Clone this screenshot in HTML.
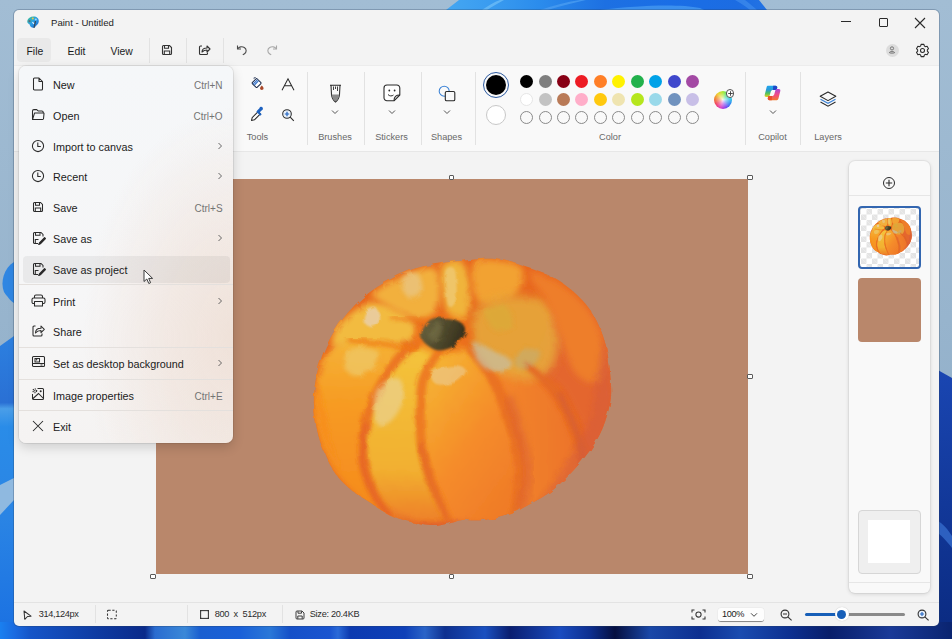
<!DOCTYPE html>
<html><head><meta charset="utf-8">
<style>
*{box-sizing:border-box}
html,body{margin:0;padding:0}
body{width:952px;height:639px;overflow:hidden;position:relative;font-family:"Liberation Sans",sans-serif;color:#1b1b1b;background:#9db8cf}
.a{position:absolute}
.t{position:absolute;white-space:pre;line-height:1}
.sep{position:absolute;width:1px;background:#e2e2e2}
.lbl{position:absolute;white-space:pre;line-height:1;font-size:9px;color:#686868;text-align:center}
.ic{position:absolute;overflow:visible}
.sw{position:absolute;width:13px;height:13px;border-radius:50%}
.swe{position:absolute;width:13px;height:13px;border-radius:50%;border:1px solid #8a8a8a}
.hd{position:absolute;width:5.4px;height:5.4px;border:1.1px solid #5a5a5a;background:#fff;border-radius:1px}
.mi{position:absolute;left:53px;font-size:10.8px;color:#1b1b1b;white-space:pre;line-height:1}
.ms{position:absolute;font-size:10px;color:#747474;white-space:pre;line-height:1;text-align:right}
.msep{position:absolute;left:19px;width:214px;height:1px;background:#e4e0dd}
.st{position:absolute;white-space:pre;line-height:1;font-size:9.2px;color:#2b2b2b}
</style></head><body>
<!-- wallpaper -->
<svg class="a" style="left:0;top:0" width="952" height="639" viewBox="0 0 952 639">
<defs>
<linearGradient id="wl" x1="0" y1="0" x2="0" y2="1">
<stop offset="0" stop-color="#a2bdd4"/><stop offset=".5" stop-color="#97b4cd"/><stop offset="1" stop-color="#8aa9c4"/></linearGradient>
<linearGradient id="wt" x1="440" y1="0" x2="770" y2="0" gradientUnits="userSpaceOnUse"><stop offset="0" stop-color="#46a8f2"/><stop offset=".15" stop-color="#3a9cf0"/><stop offset=".3" stop-color="#2b8cec"/><stop offset=".5" stop-color="#1d70e2"/><stop offset=".7" stop-color="#1a6ee6"/><stop offset=".9" stop-color="#1c6ce2"/><stop offset="1" stop-color="#2474e4"/></linearGradient>
<linearGradient id="wb" x1="0" y1="0" x2="952" y2="0" gradientUnits="userSpaceOnUse"><stop offset="0.0000" stop-color="#1a80f0"/><stop offset="0.0158" stop-color="#1a6ae0"/><stop offset="0.0315" stop-color="#1555c8"/><stop offset="0.1050" stop-color="#0e3aa0"/><stop offset="0.1523" stop-color="#0a2a8a"/><stop offset="0.1628" stop-color="#2a6cd0"/><stop offset="0.1943" stop-color="#3a88d8"/><stop offset="0.2101" stop-color="#1a5fd0"/><stop offset="0.2521" stop-color="#1a60d8"/><stop offset="0.2836" stop-color="#2a78d8"/><stop offset="0.3046" stop-color="#1550c8"/><stop offset="0.3466" stop-color="#1a55d0"/><stop offset="0.3550" stop-color="#2a6ad8"/><stop offset="0.3676" stop-color="#0c3ab0"/><stop offset="0.4254" stop-color="#0e40b8"/><stop offset="0.4464" stop-color="#2a64c8"/><stop offset="0.4674" stop-color="#0e3090"/><stop offset="0.5095" stop-color="#1a50c0"/><stop offset="0.5357" stop-color="#0a1e70"/><stop offset="0.5882" stop-color="#1a4cc0"/><stop offset="0.6197" stop-color="#0d2f90"/><stop offset="0.6460" stop-color="#050f40"/><stop offset="0.6828" stop-color="#1a48a8"/><stop offset="0.7353" stop-color="#0d2f90"/><stop offset="0.7773" stop-color="#1a4cb0"/><stop offset="0.8298" stop-color="#0d3090"/><stop offset="0.8718" stop-color="#081e6a"/><stop offset="0.9349" stop-color="#1a3a98"/><stop offset="1.0000" stop-color="#0a2470"/></linearGradient>
<linearGradient id="wr" x1="0" y1="0" x2="0" y2="1">
<stop offset="0" stop-color="#1a46b2"/><stop offset="1" stop-color="#0a2a80"/></linearGradient>
<linearGradient id="wlb" x1="0" y1="336" x2="0" y2="639" gradientUnits="userSpaceOnUse"><stop offset="0" stop-color="#2c80e0"/><stop offset=".22" stop-color="#2a70d4"/><stop offset=".24" stop-color="#4a9ee8"/><stop offset=".3" stop-color="#2a8ce8"/><stop offset=".6" stop-color="#2a84e4"/><stop offset="1" stop-color="#1a70e2"/></linearGradient>
</defs>
<rect width="952" height="639" fill="url(#wl)"/>
<path d="M459 0 L759 0 L767 10 L446 10 Z" fill="url(#wt)"/>
<path d="M482 10 C488 6 494 2 500 0 L504 0 C498 3 492 7 487 10 Z" fill="#6cbcf6" opacity=".8"/>
<path d="M540 10 C552 6 566 2 580 0 L586 0 C572 3 558 7 548 10 Z" fill="#4a9cf0" opacity=".8"/>
<path d="M600 10 C640 5 680 4 700 8 L704 10 Z" fill="#4a9ef2" opacity=".7"/>
<path d="M735 0 L745 0 C750 4 754 7 757 10 L750 10 C746 7 741 3 735 0 Z" fill="#3f8cec" opacity=".7"/>
<path d="M14 262 C4 268 0 282 4 292 C8 298 12 302 14 303 Z" fill="#2f86e2"/>
<path d="M0 346 L14 336 L14 639 L0 639 Z" fill="url(#wlb)"/>
<path d="M0 485 L14 478 L14 500 L0 515 Z" fill="#8fb9e0"/>
<path d="M936 369 L952 378 L952 639 L936 639 Z" fill="url(#wr)"/>
<path d="M936 520 C944 524 948 530 952 536 L952 548 C946 540 940 534 936 532 Z" fill="#2d60c0"/>
<rect x="0" y="622" width="952" height="17" fill="url(#wb)"/>
</svg>

<!-- window frame -->
<div class="a" style="left:13px;top:9px;width:927px;height:618px;border-radius:6px;background:rgba(40,60,90,.28)"></div>
<div class="a" id="win" style="left:14px;top:10px;width:925px;height:616px;border-radius:5px;background:#f3f3f3;overflow:hidden"></div>


<!-- title bar -->
<svg class="ic" style="left:26px;top:15px" width="14" height="14" viewBox="0 0 14 14">
<defs><linearGradient id="pi" x1="0" y1="0" x2="1" y2="1"><stop offset="0" stop-color="#3cc08a"/><stop offset=".5" stop-color="#2b9ee8"/><stop offset="1" stop-color="#1a5fc8"/></linearGradient></defs>
<path d="M7.5 1.5 C11 1.5 13 3.5 12.8 6.5 C12.6 9 10.5 10 9.5 11.5 C8.5 13 6.5 13.2 5 12 C3.5 10.8 4.2 9.5 3 9 C1.8 8.5 1 7.5 1.3 5.8 C1.8 3.2 4.5 1.5 7.5 1.5 Z" fill="url(#pi)"/>
<circle cx="3.5" cy="6.2" r="1.1" fill="#5a6a78"/>
<circle cx="6.8" cy="3.6" r="1" fill="#e8c848"/>
<circle cx="9.8" cy="4.4" r="1" fill="#9fd8f8"/>
<path d="M9.5 6 L8 12.8" stroke="#384858" stroke-width="1.2"/>
<path d="M6.5 7 L7.8 9" stroke="#eaf6ff" stroke-width="1.2"/>
</svg>
<div class="t" style="left:51px;top:17.9px;font-size:9.6px;color:#1e1e1e">Paint - Untitled</div>
<div class="a" style="left:841px;top:21px;width:10px;height:1px;background:#2a2a2a"></div>
<div class="a" style="left:878.5px;top:17.5px;width:9.5px;height:9.5px;border:1px solid #2a2a2a;border-radius:1px"></div>
<svg class="ic" style="left:914px;top:17px" width="12" height="12" viewBox="0 0 12 12"><path d="M1 1 L11 11 M11 1 L1 11" stroke="#2a2a2a" stroke-width="1.1"/></svg>
<div class="a" style="left:885.5px;top:43.5px;width:13px;height:13px;border-radius:50%;background:#dcdcdc"></div>
<svg class="ic" style="left:886px;top:44px" width="12" height="12" viewBox="0 0 12 12"><circle cx="6" cy="4.4" r="1.6" fill="none" stroke="#666" stroke-width=".85"/><path d="M3.3 8.6 C3.3 7.2 8.7 7.2 8.7 8.6 C8.7 9.3 3.3 9.3 3.3 8.6 Z" fill="none" stroke="#666" stroke-width=".85"/></svg>
<svg class="ic" style="left:915px;top:42.5px" width="15" height="15" viewBox="0 0 15 15"><path d="M5.66 2.96 L6.08 1.36 L8.92 1.36 L9.34 2.96 L10.52 3.64 L12.11 3.20 L13.52 5.66 L12.35 6.82 L12.35 8.18 L13.52 9.34 L12.11 11.80 L10.52 11.36 L9.34 12.04 L8.92 13.64 L6.08 13.64 L5.66 12.04 L4.48 11.36 L2.89 11.80 L1.48 9.34 L2.65 8.18 L2.65 6.82 L1.48 5.66 L2.89 3.20 L4.48 3.64 Z" fill="none" stroke="#2a2a2a" stroke-width="1.05" stroke-linejoin="round"/><circle cx="7.5" cy="7.5" r="2" fill="none" stroke="#2a2a2a" stroke-width="1.05"/></svg>

<!-- menu bar -->
<div class="a" style="left:17px;top:38px;width:34px;height:24px;border-radius:4px;background:#e9e9e9"></div>
<div class="t" style="left:26.5px;top:46.6px;font-size:10.4px">File</div>
<div class="t" style="left:67.5px;top:46.6px;font-size:10.4px">Edit</div>
<div class="t" style="left:110.5px;top:46.6px;font-size:10.4px">View</div>
<div class="sep" style="left:149px;top:38px;height:25px"></div>
<div class="sep" style="left:186px;top:38px;height:25px"></div>
<div class="sep" style="left:223px;top:38px;height:25px"></div>
<svg class="ic" style="left:161px;top:44px" width="12" height="12" viewBox="0 0 12 12"><path d="M1.5 2.5 Q1.5 1.5 2.5 1.5 L8.5 1.5 L10.5 3.5 L10.5 9.5 Q10.5 10.5 9.5 10.5 L2.5 10.5 Q1.5 10.5 1.5 9.5 Z" fill="none" stroke="#333" stroke-width="1.1"/><path d="M3.5 1.8 L3.5 4.2 L7.5 4.2 L7.5 1.8 M3.3 10.2 L3.3 7 L8.7 7 L8.7 10.2" fill="none" stroke="#333" stroke-width="1.1"/></svg>
<svg class="ic" style="left:198px;top:44px" width="13" height="12" viewBox="0 0 13 12"><path d="M4 2 L2.5 2 Q1.5 2 1.5 3 L1.5 9.5 Q1.5 10.5 2.5 10.5 L8.5 10.5 Q9.5 10.5 9.5 9.5 L9.5 8.5" fill="none" stroke="#333" stroke-width="1.1"/><path d="M4 8 C4 5 6 4 9 4 L9 2 L12 5 L9 8 L9 6 C7 6 5.5 6.5 4 8 Z" fill="none" stroke="#333" stroke-width="1.1" stroke-linejoin="round"/></svg>
<svg class="ic" style="left:235.5px;top:44px" width="12" height="12" viewBox="0 0 12 12"><path d="M1.5 1.5 L1.5 5 L5 5" fill="none" stroke="#4a4a4a" stroke-width="1.1"/><path d="M1.8 4.8 C3 2.8 6 2.2 8.3 3.5 C10.8 5 10.8 8.5 8.2 10 L6.8 10.8" fill="none" stroke="#4a4a4a" stroke-width="1.1"/></svg>
<svg class="ic" style="left:265.5px;top:44px" width="12" height="12" viewBox="0 0 12 12"><path d="M10.5 1.5 L10.5 5 L7 5" fill="none" stroke="#a8a8a8" stroke-width="1.1"/><path d="M10.2 4.8 C9 2.8 6 2.2 3.7 3.5 C1.2 5 1.2 8.5 3.8 10 L5.2 10.8" fill="none" stroke="#a8a8a8" stroke-width="1.1"/></svg>

<!-- ribbon -->
<div class="a" style="left:14px;top:65.4px;width:925px;height:86.6px;background:#f9f9f9;border-top:1px solid #ececec;border-bottom:1px solid #e7e7e7"></div>

<!-- ribbon content -->
<div class="sep" style="left:307px;top:72px;height:73px"></div>
<div class="sep" style="left:364px;top:72px;height:73px"></div>
<div class="sep" style="left:421px;top:72px;height:73px"></div>
<div class="sep" style="left:475px;top:72px;height:73px"></div>
<div class="sep" style="left:745px;top:72px;height:73px"></div>
<div class="sep" style="left:800px;top:72px;height:73px"></div>
<!-- tools -->
<svg class="ic" style="left:246px;top:72px" width="24" height="24" viewBox="0 0 24 24">
<g transform="rotate(45 10.6 11.1)"><rect x="7.2" y="7.7" width="6.8" height="6.8" rx="1" fill="#fff" stroke="#1c2c4c" stroke-width="1.05"/><path d="M8.8 8.3 V14 M10.4 8.3 V14" stroke="#2f6ec8" stroke-width="1.1"/></g>
<path d="M7.6 6.2 L9.6 5.6" stroke="#1c2c4c" stroke-width="1"/>
<path d="M15.8 13.4 C16.8 14.6 17.6 15.4 17.6 16.3 A1.8 1.8 0 0 1 14 16.3 C14 15.4 14.8 14.6 15.8 13.4 Z" fill="#a8482a"/>
</svg>
<svg class="ic" style="left:281px;top:78px" width="14" height="13" viewBox="0 0 14 13"><path d="M1 12.2 L7 0.8 L13 12.2 M3.4 7.8 H10.6" fill="none" stroke="#2a2a2a" stroke-width="1.05"/></svg>
<svg class="ic" style="left:250px;top:107px" width="15" height="15" viewBox="0 0 15 15">
<path d="M8.2 4.6 L2.2 10.6 L1.5 13.5 L4.4 12.8 L10.4 6.8 Z" fill="#fff" stroke="#2a2a2a" stroke-width="1.05" stroke-linejoin="round"/>
<path d="M7 4 L11 8" stroke="#1e62c0" stroke-width="2"/>
<path d="M9.3 5.7 L11.6 3.4 A1.8 1.8 0 1 0 9.4 1.2 L7.2 3.4 Z" fill="#1e62c0"/>
</svg>
<svg class="ic" style="left:281px;top:108px" width="14" height="14" viewBox="0 0 14 14"><circle cx="6" cy="6" r="4.3" fill="#eaf2fb" stroke="#2a2a2a" stroke-width="1.05"/><path d="M6 3.8 V8.2 M3.8 6 H8.2" stroke="#1e62c0" stroke-width="1.2"/><path d="M9.2 9.2 L12.8 12.8" stroke="#2a2a2a" stroke-width="1.1"/></svg>
<div class="lbl" style="left:240px;top:133.3px;width:35px;font-size:9.2px">Tools</div>
<!-- brushes -->
<svg class="ic" style="left:329px;top:84px" width="13" height="19" viewBox="0 0 13 19">
<path d="M1 1.2 H12 M2 1.2 L2.5 11 C3 14.5 5 17 6.5 18 C8 17 10 14.5 10.5 11 L11 1.2" fill="none" stroke="#2a2a2a" stroke-width="1.05"/>
<path d="M2.6 10.5 H10.4 C10 14 8 16.5 6.5 17.4 C5 16.5 3 14 2.6 10.5 Z" fill="#8a8a8a"/>
<path d="M4.5 2.5 V6 M6.5 2.5 V5 M8.5 2.5 V7" stroke="#2a2a2a" stroke-width=".9"/>
</svg>
<svg class="ic" style="left:331px;top:109px" width="8" height="6" viewBox="0 0 8 6"><path d="M1 1.5 L4 4.5 L7 1.5" fill="none" stroke="#555" stroke-width="1"/></svg>
<div class="lbl" style="left:315px;top:133.3px;width:40px;font-size:9.2px">Brushes</div>
<!-- stickers -->
<svg class="ic" style="left:383px;top:84px" width="18" height="18" viewBox="0 0 18 18">
<path d="M11 16.8 H4 A3 3 0 0 1 1 13.8 V4 A3 3 0 0 1 4 1 H13.8 A3 3 0 0 1 16.8 4 V11 Z" fill="#fff" stroke="#2a2a2a" stroke-width="1.1" stroke-linejoin="round"/>
<path d="M16.8 11 C13 11 11 12.5 11 16.8" fill="none" stroke="#2a2a2a" stroke-width="1.1"/>
<circle cx="6.3" cy="6.5" r=".9" fill="#2a2a2a"/><circle cx="11.6" cy="6.5" r=".9" fill="#2a2a2a"/>
<path d="M5 10.5 C6.5 12.3 9 12.3 10.5 11" fill="none" stroke="#2a2a2a" stroke-width="1"/>
</svg>
<svg class="ic" style="left:388px;top:109px" width="8" height="6" viewBox="0 0 8 6"><path d="M1 1.5 L4 4.5 L7 1.5" fill="none" stroke="#555" stroke-width="1"/></svg>
<div class="lbl" style="left:371px;top:133.3px;width:41px;font-size:9.2px">Stickers</div>
<!-- shapes -->
<svg class="ic" style="left:438px;top:85px" width="18" height="17" viewBox="0 0 18 17">
<circle cx="6.2" cy="6.2" r="5" fill="none" stroke="#3b82d6" stroke-width="1.05"/>
<rect x="7.3" y="6.5" width="9.5" height="9.2" rx="1.3" fill="#f9f9f9" stroke="#2a2a2a" stroke-width="1.1"/>
</svg>
<svg class="ic" style="left:443px;top:109px" width="8" height="6" viewBox="0 0 8 6"><path d="M1 1.5 L4 4.5 L7 1.5" fill="none" stroke="#555" stroke-width="1"/></svg>
<div class="lbl" style="left:426px;top:133.3px;width:41px;font-size:9.2px">Shapes</div>
<!-- colors -->
<div class="a" style="left:482.5px;top:71.5px;width:26px;height:26px;border-radius:50%;border:1.2px solid #2c5aa0"></div>
<div class="a" style="left:485.5px;top:74.5px;width:20px;height:20px;border-radius:50%;background:#000"></div>
<div class="a" style="left:485.5px;top:105px;width:20px;height:20px;border-radius:50%;background:#fff;border:1px solid #c8c8c8"></div>
<div class="sw" style="left:520.0px;top:74.5px;background:#000000"></div>
<div class="sw" style="left:520.0px;top:93px;background:#ffffff;border:1px solid #e6e6e6"></div>
<div class="swe" style="left:520.0px;top:111.3px"></div>
<div class="sw" style="left:538.5px;top:74.5px;background:#7f7f7f"></div>
<div class="sw" style="left:538.5px;top:93px;background:#c3c3c3"></div>
<div class="swe" style="left:538.5px;top:111.3px"></div>
<div class="sw" style="left:556.9px;top:74.5px;background:#880015"></div>
<div class="sw" style="left:556.9px;top:93px;background:#b97a57"></div>
<div class="swe" style="left:556.9px;top:111.3px"></div>
<div class="sw" style="left:575.4px;top:74.5px;background:#ed1c24"></div>
<div class="sw" style="left:575.4px;top:93px;background:#ffaec9"></div>
<div class="swe" style="left:575.4px;top:111.3px"></div>
<div class="sw" style="left:593.9px;top:74.5px;background:#ff7f27"></div>
<div class="sw" style="left:593.9px;top:93px;background:#ffc90e"></div>
<div class="swe" style="left:593.9px;top:111.3px"></div>
<div class="sw" style="left:612.4px;top:74.5px;background:#fff200"></div>
<div class="sw" style="left:612.4px;top:93px;background:#efe4b0"></div>
<div class="swe" style="left:612.4px;top:111.3px"></div>
<div class="sw" style="left:630.8px;top:74.5px;background:#22b14c"></div>
<div class="sw" style="left:630.8px;top:93px;background:#b5e61d"></div>
<div class="swe" style="left:630.8px;top:111.3px"></div>
<div class="sw" style="left:649.3px;top:74.5px;background:#00a2e8"></div>
<div class="sw" style="left:649.3px;top:93px;background:#99d9ea"></div>
<div class="swe" style="left:649.3px;top:111.3px"></div>
<div class="sw" style="left:667.8px;top:74.5px;background:#3f48cc"></div>
<div class="sw" style="left:667.8px;top:93px;background:#7092be"></div>
<div class="swe" style="left:667.8px;top:111.3px"></div>
<div class="sw" style="left:686.2px;top:74.5px;background:#a349a4"></div>
<div class="sw" style="left:686.2px;top:93px;background:#c8bfe7"></div>
<div class="swe" style="left:686.2px;top:111.3px"></div>
<div class="lbl" style="left:590px;top:133.3px;width:40px;font-size:9.2px">Color</div>
<div class="a" style="left:713.7px;top:90.6px;width:18.6px;height:18.6px;border-radius:50%;background:conic-gradient(from 0deg,#a8e830,#30d880,#30c8e8,#3080f0,#8040f0,#e040c0,#f04060,#f08030,#f0d030,#a8e830)"></div>
<div class="a" style="left:713.7px;top:90.6px;width:18.6px;height:18.6px;border-radius:50%;background:radial-gradient(circle,rgba(255,255,255,.9) 0,rgba(255,255,255,.5) 25%,rgba(255,255,255,0) 65%)"></div>
<div class="a" style="left:725.8px;top:89px;width:8.6px;height:8.6px;border-radius:50%;background:#fff;border:.8px solid #555"></div>
<svg class="ic" style="left:725.6px;top:88.8px" width="9" height="9" viewBox="0 0 9 9"><path d="M4.5 2.2 V6.8 M2.2 4.5 H6.8" stroke="#3a3a3a" stroke-width=".9"/></svg>
<!-- copilot -->
<svg class="ic" style="left:763px;top:84px" width="19" height="18" viewBox="0 0 19 18">
<defs><linearGradient id="cp1" x1="0" y1="0" x2="0" y2="1"><stop offset="0" stop-color="#1fa6ee"/><stop offset=".35" stop-color="#2a9ad8"/><stop offset=".65" stop-color="#48c060"/><stop offset="1" stop-color="#e8d020"/></linearGradient>
<linearGradient id="cp2" x1="0" y1="0" x2="0" y2="1"><stop offset="0" stop-color="#a848d8"/><stop offset=".5" stop-color="#f04a86"/><stop offset="1" stop-color="#f2782c"/></linearGradient></defs>
<path d="M5.2 1.8 H12.5 C13.8 1.8 14.5 2.8 14.2 4 L13.6 6 H9.8 C8.8 6 8.1 6.6 7.8 7.5 L6.6 11.8 C6.3 12.6 5.6 13 4.8 13 H3.2 C2 13 1.4 12.1 1.7 11 L3.6 3.2 C3.9 2.3 4.4 1.8 5.2 1.8 Z" fill="url(#cp1)"/>
<path d="M10.2 1.8 H12.5 C13.8 1.8 14.5 2.8 14.2 4 L13.6 6 H10 Z" fill="#1d48c8"/>
<path d="M13.8 16.2 H6.5 C5.2 16.2 4.5 15.2 4.8 14 L5.4 12 H9.2 C10.2 12 10.9 11.4 11.2 10.5 L12.4 6.2 C12.7 5.4 13.4 5 14.2 5 H15.8 C17 5 17.6 5.9 17.3 7 L15.4 14.8 C15.1 15.7 14.6 16.2 13.8 16.2 Z" fill="url(#cp2)"/>
<path d="M8.8 16.2 H6.5 C5.2 16.2 4.5 15.2 4.8 14 L5.4 12 H9 Z" fill="#e8502a"/>
</svg>
<svg class="ic" style="left:769px;top:109px" width="8" height="6" viewBox="0 0 8 6"><path d="M1 1.5 L4 4.5 L7 1.5" fill="none" stroke="#555" stroke-width="1"/></svg>
<div class="lbl" style="left:752px;top:133.3px;width:41px;font-size:9.2px">Copilot</div>
<!-- layers -->
<svg class="ic" style="left:819px;top:91px" width="18" height="17" viewBox="0 0 18 17">
<path d="M9 1 L16.8 5.3 L9 9.6 L1.2 5.3 Z" fill="none" stroke="#2a2a2a" stroke-width="1.05" stroke-linejoin="round"/>
<path d="M1.5 8.2 L9 12.3 L16.5 8.2" fill="none" stroke="#3b82d6" stroke-width="1.05"/>
<path d="M1.5 11 L9 15.2 L16.5 11" fill="none" stroke="#2a2a2a" stroke-width="1.05"/>
</svg>
<div class="lbl" style="left:808px;top:133.3px;width:40px;font-size:9.2px">Layers</div>


<!-- canvas -->
<div class="a" style="left:155.5px;top:179.4px;width:592.2px;height:394.2px;background:#b9876b"></div>
<!--PK-->
<svg class="a" style="left:0;top:0" width="952" height="639" viewBox="0 0 952 639">
<defs>
<filter id="bl1" x="-20%" y="-20%" width="140%" height="140%"><feGaussianBlur stdDeviation="1"/></filter>
<filter id="bl2" x="-20%" y="-20%" width="140%" height="140%"><feGaussianBlur stdDeviation="2"/></filter>
<filter id="bl3" x="-30%" y="-30%" width="160%" height="160%"><feGaussianBlur stdDeviation="3"/></filter>
<filter id="bl5" x="-30%" y="-30%" width="160%" height="160%"><feGaussianBlur stdDeviation="5"/></filter>
<filter id="rough" x="-5%" y="-5%" width="110%" height="110%"><feTurbulence type="fractalNoise" baseFrequency="0.09" numOctaves="2" seed="3"/><feDisplacementMap in="SourceGraphic" scale="4.5"/><feGaussianBlur stdDeviation=".6"/></filter>
<clipPath id="pkc"><path id="pkp" d="M314.0 395.0 C313.3 408.0 315.0 421.8 318.0 434.0 C321.0 446.2 326.7 458.8 332.0 468.0 C337.3 477.2 343.5 483.2 350.0 489.0 C356.5 494.8 364.7 498.8 371.0 503.0 C377.3 507.2 381.7 510.9 388.0 514.0 C394.3 517.1 401.7 519.5 409.0 521.5 C416.3 523.5 425.0 525.8 432.0 526.0 C439.0 526.2 446.0 524.0 451.0 523.0 C456.0 522.0 456.7 520.5 462.0 520.0 C467.3 519.5 475.5 520.8 483.0 520.0 C490.5 519.2 499.2 518.2 507.0 515.5 C514.8 512.8 522.2 508.4 530.0 504.0 C537.8 499.6 545.7 495.8 554.0 489.0 C562.3 482.2 572.5 471.8 580.0 463.0 C587.5 454.2 594.2 445.2 599.0 436.0 C603.8 426.8 607.0 416.5 609.0 408.0 C611.0 399.5 611.5 395.3 611.0 385.0 C610.5 374.7 608.8 357.5 606.0 346.0 C603.2 334.5 598.8 324.5 594.0 316.0 C589.2 307.5 583.7 301.3 577.0 295.0 C570.3 288.7 563.0 282.8 554.0 278.0 C545.0 273.2 532.8 269.2 523.0 266.0 C513.2 262.8 505.5 259.8 495.0 259.0 C484.5 258.2 469.7 260.2 460.0 261.0 C450.3 261.8 445.7 262.3 437.0 264.0 C428.3 265.7 419.2 266.3 408.0 271.0 C396.8 275.7 381.0 283.8 370.0 292.0 C359.0 300.2 350.0 309.3 342.0 320.0 C334.0 330.7 326.7 343.5 322.0 356.0 C317.3 368.5 314.7 382.0 314.0 395.0 Z"/></clipPath>
<linearGradient id="gL1" x1="0" y1="0" x2="0" y2="1"><stop offset="0" stop-color="#f4b438"/><stop offset=".4" stop-color="#f79a22"/><stop offset="1" stop-color="#f58a1e"/></linearGradient>
<linearGradient id="gL2" x1="0" y1="0" x2="0" y2="1"><stop offset="0" stop-color="#f4c43c"/><stop offset=".7" stop-color="#f2b030"/><stop offset="1" stop-color="#ee7e28"/></linearGradient>
<linearGradient id="gL3" x1="0" y1="0" x2=".7" y2="1"><stop offset="0" stop-color="#f4bc38"/><stop offset=".3" stop-color="#f5a42e"/><stop offset=".6" stop-color="#f58c2a"/><stop offset="1" stop-color="#f07c28"/></linearGradient>
<linearGradient id="gL4" x1="0" y1="0" x2="1" y2="0"><stop offset="0" stop-color="#f58c2a"/><stop offset="1" stop-color="#ec722c"/></linearGradient>
<linearGradient id="stg" x1="0" y1="0" x2="1" y2=".3"><stop offset="0" stop-color="#6a6440"/><stop offset=".5" stop-color="#524c2e"/><stop offset="1" stop-color="#38321e"/></linearGradient>
</defs>
<g id="pumpkinG" filter="url(#rough)">
<use href="#pkp" fill="#e8681f"/>
<g clip-path="url(#pkc)">
<path d="M316.0 385.0 C318.3 372.5 322.7 358.2 330.0 350.0 C337.3 341.8 348.3 337.3 360.0 336.0 C371.7 334.7 394.3 337.8 400.0 342.0 C405.7 346.2 398.2 352.7 394.0 361.0 C389.8 369.3 380.3 380.5 375.0 392.0 C369.7 403.5 364.2 418.3 362.0 430.0 C359.8 441.7 360.3 451.5 362.0 462.0 C363.7 472.5 367.7 484.0 372.0 493.0 C376.3 502.0 390.0 514.8 388.0 516.0 C386.0 517.2 369.7 508.5 360.0 500.0 C350.3 491.5 337.3 477.5 330.0 465.0 C322.7 452.5 318.3 438.3 316.0 425.0 C313.7 411.7 313.7 397.5 316.0 385.0 Z" fill="url(#gL1)" filter="url(#bl3)"/>
<path d="M420.0 344.0 C413.3 346.0 404.8 353.8 398.0 362.0 C391.2 370.2 384.3 381.5 379.0 393.0 C373.7 404.5 368.2 419.3 366.0 431.0 C363.8 442.7 364.3 452.5 366.0 463.0 C367.7 473.5 371.7 485.0 376.0 494.0 C380.3 503.0 380.2 512.7 392.0 517.0 C403.8 521.3 441.0 526.7 447.0 520.0 C453.0 513.3 432.7 490.3 428.0 477.0 C423.3 463.7 420.5 454.0 419.0 440.0 C417.5 426.0 418.2 404.3 419.0 393.0 C419.8 381.7 420.8 379.2 424.0 372.0 C427.2 364.8 438.7 354.7 438.0 350.0 C437.3 345.3 426.7 342.0 420.0 344.0 Z" fill="url(#gL2)" filter="url(#bl3)"/>
<path d="M442.0 351.0 C435.2 354.8 431.2 365.8 428.0 373.0 C424.8 380.2 423.8 382.7 423.0 394.0 C422.2 405.3 421.5 427.0 423.0 441.0 C424.5 455.0 427.3 464.7 432.0 478.0 C436.7 491.3 438.0 514.0 451.0 521.0 C464.0 528.0 499.2 524.7 510.0 520.0 C520.8 515.3 515.0 503.8 516.0 493.0 C517.0 482.2 517.7 467.5 516.0 455.0 C514.3 442.5 510.2 430.5 506.0 418.0 C501.8 405.5 497.2 391.3 491.0 380.0 C484.8 368.7 477.2 354.8 469.0 350.0 C460.8 345.2 448.8 347.2 442.0 351.0 Z" fill="url(#gL3)" filter="url(#bl3)"/>
<path d="M476.0 350.0 C471.8 351.8 491.8 368.7 498.0 380.0 C504.2 391.3 508.8 405.5 513.0 418.0 C517.2 430.5 521.3 442.5 523.0 455.0 C524.7 467.5 524.0 482.2 523.0 493.0 C522.0 503.8 507.7 523.3 517.0 520.0 C526.3 516.7 570.0 487.2 579.0 473.0 C588.0 458.8 575.7 448.0 571.0 435.0 C566.3 422.0 559.0 406.0 551.0 395.0 C543.0 384.0 535.5 376.5 523.0 369.0 C510.5 361.5 480.2 348.2 476.0 350.0 Z" fill="url(#gL4)" filter="url(#bl3)"/>
<path d="M533.0 363.0 C533.2 377.8 553.0 378.0 561.0 389.0 C569.0 400.0 576.3 416.0 581.0 429.0 C585.7 442.0 590.0 458.5 589.0 467.0 C588.0 475.5 573.2 484.5 575.0 480.0 C576.8 475.5 593.8 455.0 600.0 440.0 C606.2 425.0 611.0 405.8 612.0 390.0 C613.0 374.2 609.7 358.0 606.0 345.0 C602.3 332.0 597.7 319.5 590.0 312.0 C582.3 304.5 569.5 291.5 560.0 300.0 C550.5 308.5 532.8 348.2 533.0 363.0 Z" fill="#e4662e" filter="url(#bl3)"/>
<!-- top lobes -->
<path d="M338.0 326.0 C343.7 319.0 357.3 306.3 368.0 304.0 C378.7 301.7 393.7 307.0 402.0 312.0 C410.3 317.0 418.7 328.7 418.0 334.0 C417.3 339.3 407.7 342.7 398.0 344.0 C388.3 345.3 370.7 341.7 360.0 342.0 C349.3 342.3 337.7 348.7 334.0 346.0 C330.3 343.3 332.3 333.0 338.0 326.0 Z" fill="#f2bb40" filter="url(#bl3)"/>
<path d="M374.0 293.0 C377.7 288.2 396.0 279.2 406.0 275.0 C416.0 270.8 428.3 264.2 434.0 268.0 C439.7 271.8 440.7 289.7 440.0 298.0 C439.3 306.3 435.3 315.0 430.0 318.0 C424.7 321.0 415.7 318.3 408.0 316.0 C400.3 313.7 389.7 307.8 384.0 304.0 C378.3 300.2 370.3 297.8 374.0 293.0 Z" fill="#f2b03c" filter="url(#bl3)"/>
<path d="M442.0 266.0 C445.2 260.5 457.3 258.0 462.0 262.0 C466.7 266.0 469.3 280.7 470.0 290.0 C470.7 299.3 469.3 313.3 466.0 318.0 C462.7 322.7 453.8 321.8 450.0 318.0 C446.2 314.2 444.3 303.7 443.0 295.0 C441.7 286.3 438.8 271.5 442.0 266.0 Z" fill="#f0b43a" filter="url(#bl3)"/>
<path d="M474.0 263.0 C478.0 256.8 492.0 260.0 500.0 261.0 C508.0 262.0 519.3 263.5 522.0 269.0 C524.7 274.5 521.0 288.3 516.0 294.0 C511.0 299.7 498.7 302.3 492.0 303.0 C485.3 303.7 479.0 304.7 476.0 298.0 C473.0 291.3 470.0 269.2 474.0 263.0 Z" fill="#f2a232" filter="url(#bl3)"/>
<path d="M480.0 305.0 C488.0 298.5 508.3 295.8 520.0 296.0 C531.7 296.2 543.7 297.8 550.0 306.0 C556.3 314.2 558.7 333.7 558.0 345.0 C557.3 356.3 553.2 368.5 546.0 374.0 C538.8 379.5 526.0 380.3 515.0 378.0 C504.0 375.7 487.2 367.2 480.0 360.0 C472.8 352.8 472.0 344.2 472.0 335.0 C472.0 325.8 472.0 311.5 480.0 305.0 Z" fill="#e6ac3c" opacity=".85" filter="url(#bl5)"/>
<path d="M530.0 274.0 C532.3 271.3 550.0 277.7 560.0 284.0 C570.0 290.3 582.7 301.7 590.0 312.0 C597.3 322.3 602.3 334.7 604.0 346.0 C605.7 357.3 604.7 375.3 600.0 380.0 C595.3 384.7 582.7 381.5 576.0 374.0 C569.3 366.5 565.0 347.3 560.0 335.0 C555.0 322.7 551.0 310.2 546.0 300.0 C541.0 289.8 527.7 276.7 530.0 274.0 Z" fill="#ee7e2a" filter="url(#bl3)"/>
<!-- broad grooves -->
<g fill="none" stroke-linecap="round" filter="url(#bl2)">
<path d="M418.0 343.0 C414.3 346.0 402.8 352.8 396.0 361.0 C389.2 369.2 382.3 380.5 377.0 392.0 C371.7 403.5 366.2 418.3 364.0 430.0 C361.8 441.7 362.3 451.5 364.0 462.0 C365.7 472.5 369.7 484.0 374.0 493.0 C378.3 502.0 387.3 512.2 390.0 516.0" stroke="#ec7420" stroke-width="7"/>
<path d="M440.0 350.0 C437.7 353.7 429.2 364.8 426.0 372.0 C422.8 379.2 421.8 381.7 421.0 393.0 C420.2 404.3 419.5 426.0 421.0 440.0 C422.5 454.0 425.3 463.7 430.0 477.0 C434.7 490.3 445.8 512.8 449.0 520.0" stroke="#ee7a22" stroke-width="7"/>
<path d="M471.0 350.0 C474.7 355.0 486.8 368.7 493.0 380.0 C499.2 391.3 503.8 405.5 508.0 418.0 C512.2 430.5 516.3 442.5 518.0 455.0 C519.7 467.5 519.0 482.2 518.0 493.0 C517.0 503.8 513.0 515.5 512.0 520.0" stroke="#ea7224" stroke-width="8"/>
<path d="M528.0 366.0 C532.7 370.3 548.0 381.0 556.0 392.0 C564.0 403.0 571.3 419.0 576.0 432.0 C580.7 445.0 582.7 463.7 584.0 470.0" stroke="#e46a28" stroke-width="7"/>
</g>
<!-- groove darkening -->
<g fill="none" stroke-linecap="round">
<path d="M510.0 400.0 C511.7 405.8 517.0 423.3 520.0 435.0 C523.0 446.7 527.7 457.5 528.0 470.0 C528.3 482.5 523.0 503.3 522.0 510.0" stroke="#d95e36" stroke-width="10" opacity=".5" filter="url(#bl3)"/>
<path d="M560.0 395.0 C563.0 401.7 573.7 422.5 578.0 435.0 C582.3 447.5 584.7 464.2 586.0 470.0" stroke="#d25a3a" stroke-width="6" opacity=".55" filter="url(#bl2)"/>
<path d="M366.0 425.0 C365.3 430.8 361.0 448.8 362.0 460.0 C363.0 471.2 367.7 483.0 372.0 492.0 C376.3 501.0 385.3 510.3 388.0 514.0" stroke="#e4602a" stroke-width="5" opacity=".7" filter="url(#bl2)"/>
<path d="M421.0 445.0 C422.5 450.8 425.7 467.8 430.0 480.0 C434.3 492.2 444.2 511.7 447.0 518.0" stroke="#e0602c" stroke-width="5" opacity=".6" filter="url(#bl2)"/>
<path d="M350.0 340.0 C356.7 340.8 379.0 343.3 390.0 345.0 C401.0 346.7 411.7 349.2 416.0 350.0" stroke="#f07818" stroke-width="5" opacity=".8" filter="url(#bl2)"/>
<path d="M392.0 318.0 C396.7 318.3 412.0 318.8 420.0 320.0 C428.0 321.2 436.7 324.2 440.0 325.0" stroke="#f07a1a" stroke-width="4" opacity=".7" filter="url(#bl2)"/>
</g>
<!-- right edge reddish -->
<path d="M604.0 340.0 C606.7 345.0 614.3 381.7 614.0 400.0 C613.7 418.3 609.0 435.0 602.0 450.0 C595.0 465.0 583.7 479.3 572.0 490.0 C560.3 500.7 533.7 517.3 532.0 514.0 C530.3 510.7 552.3 485.7 562.0 470.0 C571.7 454.3 584.0 436.7 590.0 420.0 C596.0 403.3 595.7 383.3 598.0 370.0 C600.3 356.7 601.3 335.0 604.0 340.0 Z" fill="#d25a40" opacity=".45" filter="url(#bl3)"/>
<path d="M380.0 506.0 C376.7 504.3 406.7 519.5 420.0 522.0 C433.3 524.5 446.7 520.8 460.0 521.0 C473.3 521.2 486.7 525.2 500.0 523.0 C513.3 520.8 540.0 506.8 540.0 508.0 C540.0 509.2 516.7 526.0 500.0 530.0 C483.3 534.0 460.0 536.0 440.0 532.0 C420.0 528.0 383.3 507.7 380.0 506.0 Z" fill="#d8583a" opacity=".5" filter="url(#bl2)"/>
<path d="M316.0 380.0 C316.0 385.0 318.0 415.0 322.0 430.0 C326.0 445.0 338.7 468.3 340.0 470.0 C341.3 471.7 333.0 451.7 330.0 440.0 C327.0 428.3 324.3 410.0 322.0 400.0 C319.7 390.0 316.0 375.0 316.0 380.0 Z" fill="#f78c1a" opacity=".8" filter="url(#bl2)"/>
<!-- highlights -->
<path d="M347.0 352.0 C349.8 348.5 356.8 347.0 362.0 347.0 C367.2 347.0 376.0 348.5 378.0 352.0 C380.0 355.5 377.7 364.0 374.0 368.0 C370.3 372.0 360.8 376.0 356.0 376.0 C351.2 376.0 346.5 372.0 345.0 368.0 C343.5 364.0 344.2 355.5 347.0 352.0 Z" fill="#eec868" opacity=".75" filter="url(#bl2)"/>
<path d="M366.0 312.0 C368.0 309.7 373.7 306.7 376.0 308.0 C378.3 309.3 380.7 316.8 380.0 320.0 C379.3 323.2 374.7 326.7 372.0 327.0 C369.3 327.3 365.0 324.5 364.0 322.0 C363.0 319.5 364.0 314.3 366.0 312.0 Z" fill="#e8d0b0" opacity=".8" filter="url(#bl1)"/>
<path d="M404.0 276.0 C406.7 273.7 415.0 271.3 418.0 274.0 C421.0 276.7 423.3 288.0 422.0 292.0 C420.7 296.0 413.3 298.7 410.0 298.0 C406.7 297.3 403.0 291.7 402.0 288.0 C401.0 284.3 401.3 278.3 404.0 276.0 Z" fill="#e8c88a" opacity=".7" filter="url(#bl2)"/>
<path d="M445.0 272.0 C446.2 266.2 453.2 265.3 455.0 270.0 C456.8 274.7 457.2 294.2 456.0 300.0 C454.8 305.8 449.8 309.7 448.0 305.0 C446.2 300.3 443.8 277.8 445.0 272.0 Z" fill="#eed088" opacity=".6" filter="url(#bl1)"/>
<path d="M378.0 388.0 C382.0 383.0 393.7 376.3 398.0 378.0 C402.3 379.7 405.0 391.0 404.0 398.0 C403.0 405.0 396.3 415.5 392.0 420.0 C387.7 424.5 381.0 427.0 378.0 425.0 C375.0 423.0 374.0 414.2 374.0 408.0 C374.0 401.8 374.0 393.0 378.0 388.0 Z" fill="#ead292" opacity=".7" filter="url(#bl2)"/>
<path d="M432.0 372.0 C434.7 369.0 446.3 366.3 452.0 366.0 C457.7 365.7 465.3 367.3 466.0 370.0 C466.7 372.7 461.0 379.7 456.0 382.0 C451.0 384.3 440.0 385.7 436.0 384.0 C432.0 382.3 429.3 375.0 432.0 372.0 Z" fill="#ead0a0" opacity=".55" filter="url(#bl1)"/>
<path d="M472.0 343.0 C473.7 340.3 485.3 346.8 492.0 350.0 C498.7 353.2 510.3 358.3 512.0 362.0 C513.7 365.7 507.0 371.3 502.0 372.0 C497.0 372.7 487.0 370.8 482.0 366.0 C477.0 361.2 470.3 345.7 472.0 343.0 Z" fill="#cabc98" opacity=".8" filter="url(#bl2)"/>
<path d="M520.0 350.0 C524.2 347.7 538.3 349.0 540.0 352.0 C541.7 355.0 534.2 365.7 530.0 368.0 C525.8 370.3 516.7 369.0 515.0 366.0 C513.3 363.0 515.8 352.3 520.0 350.0 Z" fill="#b8b48a" opacity=".45" filter="url(#bl2)"/>
<path d="M485.0 310.0 C486.7 305.8 500.5 302.5 505.0 305.0 C509.5 307.5 513.7 320.8 512.0 325.0 C510.3 329.2 499.5 332.5 495.0 330.0 C490.5 327.5 483.3 314.2 485.0 310.0 Z" fill="#d4b03a" opacity=".5" filter="url(#bl2)"/>
</g>
<!-- stem -->
<path d="M414.0 334.0 C415.3 329.3 420.7 321.3 426.0 318.0 C431.3 314.7 439.3 313.7 446.0 314.0 C452.7 314.3 462.0 316.7 466.0 320.0 C470.0 323.3 471.0 329.0 470.0 334.0 C469.0 339.0 465.7 346.7 460.0 350.0 C454.3 353.3 443.0 354.7 436.0 354.0 C429.0 353.3 421.7 349.3 418.0 346.0 C414.3 342.7 412.7 338.7 414.0 334.0 Z" fill="#f07416" opacity=".6" filter="url(#bl3)"/>
<path d="M421.0 337.0 C420.0 332.0 425.8 323.2 430.0 320.0 C434.2 316.8 441.0 317.7 446.0 318.0 C451.0 318.3 456.7 319.7 460.0 322.0 C463.3 324.3 467.0 328.0 466.0 332.0 C465.0 336.0 459.0 343.0 454.0 346.0 C449.0 349.0 441.5 351.5 436.0 350.0 C430.5 348.5 422.0 342.0 421.0 337.0 Z" fill="url(#stg)" filter="url(#bl1)"/>
<path d="M428.0 334.0 C428.2 331.0 431.7 325.8 434.0 324.0 C436.3 322.2 441.0 321.0 442.0 323.0 C443.0 325.0 441.5 332.8 440.0 336.0 C438.5 339.2 435.0 342.3 433.0 342.0 C431.0 341.7 427.8 337.0 428.0 334.0 Z" fill="#7a7448" opacity=".6" filter="url(#bl2)"/>
</g>
</svg>
<!--/PK-->

<div class="hd" style="left:150.3px;top:174.6px"></div>
<div class="hd" style="left:448.9px;top:174.6px"></div>
<div class="hd" style="left:747.3px;top:174.6px"></div>
<div class="hd" style="left:150.3px;top:373.8px"></div>
<div class="hd" style="left:747.3px;top:373.8px"></div>
<div class="hd" style="left:150.3px;top:573.6px"></div>
<div class="hd" style="left:448.9px;top:573.6px"></div>
<div class="hd" style="left:747.3px;top:573.6px"></div>

<!-- layers panel -->
<div class="a" style="left:849px;top:161px;width:81px;height:432px;border-radius:6px;background:#f9f9f9;box-shadow:0 1px 4px rgba(0,0,0,.14),0 0 0 1px rgba(0,0,0,.04)"></div>
<div class="a" style="left:883.3px;top:176.7px;width:12px;height:12px;border-radius:50%;border:1.1px solid #2a2a2a"></div>
<svg class="ic" style="left:883.3px;top:176.7px" width="12" height="12" viewBox="0 0 12 12"><path d="M6 2.8 V9.2 M2.8 6 H9.2" stroke="#2a2a2a" stroke-width="1.1"/></svg>
<div class="a" style="left:849px;top:195px;width:81px;height:1px;background:#e6e6e6"></div>
<div class="a" style="left:858px;top:206px;width:63px;height:63px;border-radius:4px;border:2px solid #3366b0;background-color:#fff;background-image:linear-gradient(45deg,#e4e4e4 25%,transparent 25%,transparent 75%,#e4e4e4 75%),linear-gradient(45deg,#e4e4e4 25%,transparent 25%,transparent 75%,#e4e4e4 75%);background-size:11px 11px;background-position:1px 1px,6.5px 6.5px"></div>
<svg class="a" style="left:0;top:0" width="952" height="639" viewBox="0 0 952 639"><g transform="translate(825.3 180.95) scale(0.1415)"><use href="#pumpkinG"/></g></svg>
<div class="a" style="left:858px;top:278px;width:63px;height:63.5px;border-radius:4px;background:#b9876b"></div>
<div class="a" style="left:858px;top:510px;width:63px;height:63.5px;border-radius:4px;background:#efefef;border:1px solid #d6d6d6"></div>
<div class="a" style="left:868px;top:520.3px;width:42px;height:43px;background:#fff"></div>
<div class="a" style="left:849px;top:582px;width:81px;height:1px;background:#e6e6e6"></div>

<!-- status bar -->
<svg class="ic" style="left:23px;top:610px" width="9" height="10" viewBox="0 0 9 10"><path d="M1 1 L8 6.2 L4.5 6.5 L1.8 9.3 Z" fill="none" stroke="#333" stroke-width="1.05" stroke-linejoin="round"/></svg>
<div class="st" style="left:38.8px;top:610.4px;letter-spacing:-.35px">314,124px</div>
<div class="sep" style="left:95px;top:605px;height:18px"></div>
<svg class="ic" style="left:106px;top:609px" width="12" height="11" viewBox="0 0 12 11"><rect x="1.5" y="1.2" width="8.8" height="8.6" rx="1" fill="none" stroke="#333" stroke-width="1.05" stroke-dasharray="2.2 1.6"/></svg>
<div class="sep" style="left:187px;top:605px;height:18px"></div>
<svg class="ic" style="left:199px;top:609px" width="11" height="11" viewBox="0 0 11 11"><rect x="1.6" y="1.6" width="7.8" height="7.8" fill="none" stroke="#333" stroke-width="1.05"/><path d="M1 1 h1.3 v1.3 h-1.3z M8.7 1 h1.3 v1.3 h-1.3z M1 8.7 h1.3 v1.3 h-1.3z M8.7 8.7 h1.3 v1.3 h-1.3z" fill="#333"/></svg>
<div class="st" style="left:214.7px;top:610.4px;letter-spacing:-.3px">800  x  512px</div>
<div class="sep" style="left:282px;top:605px;height:18px"></div>
<svg class="ic" style="left:294.5px;top:609.5px" width="10" height="10" viewBox="0 0 10 10"><path d="M1 2 Q1 1 2 1 L7 1 L9 3 L9 8 Q9 9 8 9 L2 9 Q1 9 1 8 Z M3 1.3 V3.2 H6.5 V1.3 M2.8 8.8 V6 H7.2 V8.8" fill="none" stroke="#333" stroke-width=".95"/></svg>
<div class="st" style="left:309.8px;top:610.4px;letter-spacing:-.3px">Size: 20.4KB</div>
<svg class="ic" style="left:691px;top:609px" width="15" height="11" viewBox="0 0 15 11"><path d="M1 3.5 V1 H3.5 M11.5 1 H14 V3.5 M14 7.5 V10 H11.5 M3.5 10 H1 V7.5" fill="none" stroke="#333" stroke-width="1.05"/><circle cx="7.5" cy="5.5" r="2.6" fill="none" stroke="#333" stroke-width="1.05"/></svg>
<div class="a" style="left:718px;top:608px;width:45.5px;height:13.5px;background:#fdfdfd;border-radius:3px;border-bottom:1px solid #8a8a8a;box-shadow:0 0 0 .5px #e8e8e8"></div>
<div class="st" style="left:722px;top:610.4px;letter-spacing:-.4px;color:#1b1b1b">100%</div>
<svg class="ic" style="left:749.5px;top:611.5px" width="8" height="6" viewBox="0 0 8 6"><path d="M1 1.3 L4 4.3 L7 1.3" fill="none" stroke="#444" stroke-width="1"/></svg>
<svg class="ic" style="left:780px;top:609px" width="13" height="12" viewBox="0 0 13 12"><circle cx="5" cy="5" r="3.9" fill="none" stroke="#333" stroke-width="1.1"/><path d="M3 5 H7 M7.8 7.8 L11.6 11.4" stroke="#333" stroke-width="1.1"/></svg>
<div class="a" style="left:804.5px;top:612.9px;width:37px;height:3px;border-radius:2px;background:#175fb8"></div>
<div class="a" style="left:841px;top:612.9px;width:64px;height:3px;border-radius:2px;background:#8a8a8a"></div>
<div class="a" style="left:834.6px;top:607.4px;width:14px;height:14px;border-radius:50%;background:#fff;box-shadow:0 0 1px rgba(0,0,0,.25)"></div>
<div class="a" style="left:836.8px;top:609.6px;width:9.6px;height:9.6px;border-radius:50%;background:#175fb8"></div>
<svg class="ic" style="left:917px;top:608.5px" width="13" height="12" viewBox="0 0 13 12"><circle cx="5" cy="5" r="3.9" fill="#e8f0fa" stroke="#333" stroke-width="1.1"/><path d="M3 5 H7 M5 3 V7" stroke="#1e62c0" stroke-width="1.1"/><path d="M7.8 7.8 L11.6 11.4" stroke="#333" stroke-width="1.1"/></svg>

<!-- status bar border -->

<!-- file menu -->
<div class="a" style="left:18.7px;top:66.3px;width:214.8px;height:376.9px;border-radius:7px;box-shadow:0 4px 12px rgba(0,0,0,.16),0 0 0 1px rgba(0,0,0,.07);background:radial-gradient(ellipse 150px 230px at 100% 72%,rgba(236,214,200,.62) 0%,rgba(236,214,200,.4) 45%,rgba(236,214,200,0) 100%),linear-gradient(180deg,#f5f7f9 0%,#f6f6f7 60%,#f5f3f2 100%)"></div>
<div class="a" style="left:22.5px;top:255.5px;width:207.5px;height:27.5px;border-radius:4px;background:rgba(0,0,0,.052)"></div>
<div class="msep" style="top:284.3px"></div>
<div class="msep" style="top:347.3px"></div>
<div class="msep" style="top:378.5px"></div>
<div class="msep" style="top:410px"></div>
<div class="mi" style="top:79.9px">New</div>
<div class="ms" style="left:150px;width:72.6px;top:80.7px">Ctrl+N</div>
<div class="mi" style="top:110.9px">Open</div>
<div class="ms" style="left:150px;width:72.6px;top:111.7px">Ctrl+O</div>
<div class="mi" style="top:141.7px">Import to canvas</div>
<svg class="ic" style="left:216.5px;top:141.7px" width="6" height="8" viewBox="0 0 6 8"><path d="M1.5 1 L4.5 4 L1.5 7" fill="none" stroke="#555" stroke-width=".9"/></svg>
<div class="mi" style="top:172.0px">Recent</div>
<svg class="ic" style="left:216.5px;top:172.0px" width="6" height="8" viewBox="0 0 6 8"><path d="M1.5 1 L4.5 4 L1.5 7" fill="none" stroke="#555" stroke-width=".9"/></svg>
<div class="mi" style="top:203.0px">Save</div>
<div class="ms" style="left:150px;width:72.6px;top:203.8px">Ctrl+S</div>
<div class="mi" style="top:233.9px">Save as</div>
<svg class="ic" style="left:216.5px;top:233.9px" width="6" height="8" viewBox="0 0 6 8"><path d="M1.5 1 L4.5 4 L1.5 7" fill="none" stroke="#555" stroke-width=".9"/></svg>
<div class="mi" style="top:265.2px">Save as project</div>
<div class="mi" style="top:296.5px">Print</div>
<svg class="ic" style="left:216.5px;top:296.5px" width="6" height="8" viewBox="0 0 6 8"><path d="M1.5 1 L4.5 4 L1.5 7" fill="none" stroke="#555" stroke-width=".9"/></svg>
<div class="mi" style="top:327.0px">Share</div>
<div class="mi" style="top:358.6px">Set as desktop background</div>
<svg class="ic" style="left:216.5px;top:358.6px" width="6" height="8" viewBox="0 0 6 8"><path d="M1.5 1 L4.5 4 L1.5 7" fill="none" stroke="#555" stroke-width=".9"/></svg>
<div class="mi" style="top:390.7px">Image properties</div>
<div class="ms" style="left:150px;width:72.6px;top:391.5px">Ctrl+E</div>
<div class="mi" style="top:422.0px">Exit</div>

<svg class="ic" style="left:31px;top:77px" width="14" height="14" viewBox="0 0 14 14"><path d="M2.5 2 Q2.5 1 3.5 1 L8 1 L11.5 4.5 L11.5 12 Q11.5 13 10.5 13 L3.5 13 Q2.5 13 2.5 12 Z M8 1 V4.5 H11.5" fill="none" stroke="#2a2a2a" stroke-width="1.05" stroke-linejoin="round"/></svg>
<svg class="ic" style="left:30.5px;top:108px" width="15" height="13" viewBox="0 0 15 13"><path d="M1.5 11.3 V3 Q1.5 1.6 2.9 1.6 H5.7 L7.1 2.9 H10.9 Q12.2 2.9 12.2 4.2 V4.9" fill="none" stroke="#2a2a2a" stroke-width="1.05" stroke-linejoin="round"/><path d="M3.6 4.9 H12.4 Q13.1 4.9 13 5.6 L12.5 10.8 Q12.4 11.5 11.7 11.5 H1.5 L3.6 4.9 Z" fill="none" stroke="#2a2a2a" stroke-width="1.05" stroke-linejoin="round"/></svg>
<svg class="ic" style="left:30.5px;top:138.5px" width="14" height="14" viewBox="0 0 14 14"><circle cx="7" cy="7" r="5.6" fill="none" stroke="#2a2a2a" stroke-width="1.05"/><path d="M6.8 3.6 V7.4 H9.8" fill="none" stroke="#2a2a2a" stroke-width="1.05"/></svg>
<svg class="ic" style="left:30.5px;top:169px" width="14" height="14" viewBox="0 0 14 14"><circle cx="7" cy="7" r="5.6" fill="none" stroke="#2a2a2a" stroke-width="1.05"/><path d="M6.8 3.6 V7.4 H9.8" fill="none" stroke="#2a2a2a" stroke-width="1.05"/></svg>
<svg class="ic" style="left:32px;top:201px" width="12" height="12" viewBox="0 0 12 12"><path d="M1.5 2.5 Q1.5 1.5 2.5 1.5 L8.5 1.5 L10.5 3.5 L10.5 9.5 Q10.5 10.5 9.5 10.5 L2.5 10.5 Q1.5 10.5 1.5 9.5 Z M3.5 1.8 V4.2 H7.5 V1.8 M3.3 10.2 V7 H8.7 V10.2" fill="none" stroke="#2a2a2a" stroke-width="1.05"/></svg>
<svg class="ic" style="left:31.5px;top:231px" width="14" height="14" viewBox="0 0 14 14"><path d="M6 12.5 L2.5 12.5 Q1.5 12.5 1.5 11.5 L1.5 2.5 Q1.5 1.5 2.5 1.5 L9 1.5 L11 3.5 L11 5.5 M3.5 1.8 V4.2 H8 V1.8 M3.3 12.2 V8.5 H6.5" fill="none" stroke="#2a2a2a" stroke-width="1.05"/><path d="M12.6 6.8 L7.5 11.9 L6.8 13.4 L8.3 12.7 L13.4 7.6 Z" fill="#2a2a2a" stroke="#2a2a2a" stroke-width="1.3" stroke-linejoin="round"/></svg>
<svg class="ic" style="left:31.5px;top:262px" width="14" height="14" viewBox="0 0 14 14"><path d="M6 12.5 L2.5 12.5 Q1.5 12.5 1.5 11.5 L1.5 2.5 Q1.5 1.5 2.5 1.5 L9 1.5 L11 3.5 L11 5.5 M3.5 1.8 V4.2 H8 V1.8 M3.3 12.2 V8.5 H6.5" fill="none" stroke="#2a2a2a" stroke-width="1.05"/><path d="M12.6 6.8 L7.5 11.9 L6.8 13.4 L8.3 12.7 L13.4 7.6 Z" fill="#2a2a2a" stroke="#2a2a2a" stroke-width="1.3" stroke-linejoin="round"/></svg>
<svg class="ic" style="left:30.5px;top:293.5px" width="15" height="13" viewBox="0 0 15 13"><path d="M3.5 4 V2.5 Q3.5 1 5 1 L10 1 Q11.5 1 11.5 2.5 V4 M3.5 9.5 H2.5 Q1 9.5 1 8 V5.5 Q1 4 2.5 4 L12.5 4 Q14 4 14 5.5 V8 Q14 9.5 12.5 9.5 H11.5 M3.5 7.5 H11.5 V12 H3.5 Z" fill="none" stroke="#2a2a2a" stroke-width="1.05" stroke-linejoin="round"/></svg>
<svg class="ic" style="left:31px;top:324px" width="14" height="13" viewBox="0 0 14 13"><path d="M4.5 2 L3 2 Q2 2 2 3 L2 11 Q2 12 3 12 L10 12 Q11 12 11 11 L11 9.5" fill="none" stroke="#2a2a2a" stroke-width="1.05"/><path d="M4.5 9 C4.5 5.5 7 4.3 10 4.3 L10 2 L13.3 5.3 L10 8.6 L10 6.4 C7.8 6.4 6 7 4.5 9 Z" fill="none" stroke="#2a2a2a" stroke-width="1.05" stroke-linejoin="round"/></svg>
<svg class="ic" style="left:30.5px;top:355px" width="15" height="14" viewBox="0 0 15 14"><path d="M1.5 2.5 Q1.5 1.5 2.5 1.5 L12.5 1.5 Q13.5 1.5 13.5 2.5 L13.5 10.5 Q13.5 11.5 12.5 11.5 L2.5 11.5 Q1.5 11.5 1.5 10.5 Z M1.5 8.5 H13.5 M9.5 10 H11.5 M4 3.5 H8.5 V7 H4 Z" fill="none" stroke="#2a2a2a" stroke-width="1.05"/><circle cx="5.6" cy="4.8" r=".8" fill="#2a2a2a"/></svg>
<svg class="ic" style="left:31px;top:387px" width="14" height="14" viewBox="0 0 14 14"><path d="M6.5 1.5 H11.5 Q12.5 1.5 12.5 2.5 V11.5 Q12.5 12.5 11.5 12.5 H2.5 Q1.5 12.5 1.5 11.5 V7 M1.5 12 L7.5 6.5 L12.5 11.5 M9.8 4.5 A.01 .01 0 0 0 9.8 4.5" fill="none" stroke="#2a2a2a" stroke-width="1.05"/><circle cx="9.7" cy="4.3" r="1" fill="#2a2a2a"/><circle cx="3.8" cy="3.8" r="1.8" fill="none" stroke="#2a2a2a" stroke-width="1.3" stroke-dasharray="1 .9"/><circle cx="3.8" cy="3.8" r=".7" fill="#2a2a2a"/></svg>
<svg class="ic" style="left:32px;top:419.5px" width="12" height="12" viewBox="0 0 12 12"><path d="M1 1 L11 11 M11 1 L1 11" stroke="#2a2a2a" stroke-width="1.05"/></svg>
<!-- cursor -->
<svg class="ic" style="left:142.5px;top:269px" width="12" height="16" viewBox="0 0 12 16"><path d="M1 1 L1 12.5 L3.8 10 L5.8 14.5 L7.6 13.7 L5.7 9.4 L9.6 9.4 Z" fill="#fff" stroke="#3a3a3a" stroke-width="1" stroke-linejoin="round"/></svg>

<!--endmenu-->
<div class="a" style="left:14px;top:602px;width:925px;height:1px;background:#e3e3e3"></div>

</body></html>
